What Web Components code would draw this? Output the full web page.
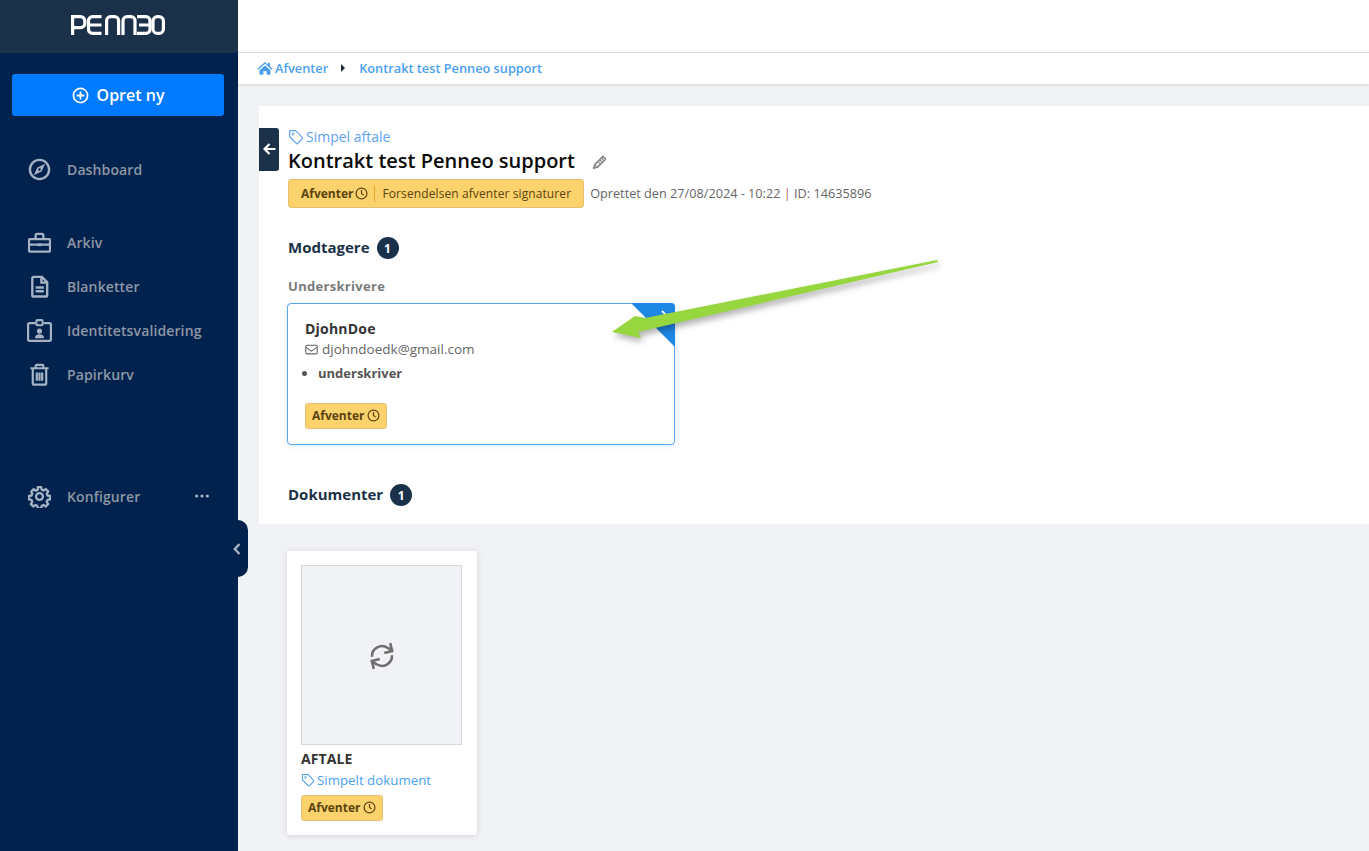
<!DOCTYPE html>
<html lang="da">
<head>
<meta charset="utf-8">
<title>Kontrakt test Penneo support</title>
<style>
  html, body { margin: 0; height: 851px; overflow: hidden; background: #f0f2f5; font-family: "Open Sans", "Liberation Sans", sans-serif; }
</style>
</head>
<body>
<pn-app></pn-app>
<script>
const ICONS = {
  plus: '<circle cx="12" cy="12" r="10" fill="none" stroke="currentColor" stroke-width="2.400"/><path d="M12 6.500v11M6.500 12h11" stroke="currentColor" stroke-width="2.600" fill="none"/>',
  compass: '<circle cx="12" cy="12" r="10" fill="none" stroke="currentColor" stroke-width="2.500"/><path d="M18 6l-8.200 3.800L6 18l8.200-3.800z" fill="currentColor"/><circle cx="12" cy="12" r="1.300" fill="#01224d"/>',
  briefcase: '<path d="M2 8.500h20a1 1 0 0 1 1 1V20a1.500 1.500 0 0 1-1.500 1.500h-19A1.500 1.500 0 0 1 1 20V9.500a1 1 0 0 1 1-1zM8 8V4.500A1.500 1.500 0 0 1 9.500 3h5A1.500 1.500 0 0 1 16 4.500V8M1 14.200h8.500M14.500 14.200H23" fill="none" stroke="currentColor" stroke-width="2.400"/><rect x="9.500" y="12.800" width="5" height="3" fill="currentColor"/>',
  file: '<path d="M6 2h8.500L20 7.500V21a1.500 1.500 0 0 1-1.500 1.500h-12.500A1.500 1.500 0 0 1 4.500 21V3.500A1.500 1.500 0 0 1 6 2zM14 2v6h6" fill="none" stroke="currentColor" stroke-width="2.500"/><path d="M8 13h8.500M8 17h8.500" stroke="currentColor" stroke-width="2.500"/>',
  idcard: '<path d="M8 5H2.500A1.500 1.500 0 0 0 1 6.500v14A1.500 1.500 0 0 0 2.500 22h19a1.500 1.500 0 0 0 1.500-1.500v-14A1.500 1.500 0 0 0 21.500 5H16" fill="none" stroke="currentColor" stroke-width="2.200"/><rect x="9" y="2" width="6" height="5" rx="1" fill="none" stroke="currentColor" stroke-width="2"/><circle cx="12" cy="12.500" r="2.500" fill="currentColor"/><path d="M7.500 19.500c0-2.300 2-3.800 4.500-3.800s4.500 1.500 4.500 3.800z" fill="currentColor"/>',
  trash: '<path d="M2.500 5.500h19M8 5V3a1 1 0 0 1 1-1h6a1 1 0 0 1 1 1v2M5 6v15a1.500 1.500 0 0 0 1.500 1.500h11A1.500 1.500 0 0 0 19 21V6M9.200 10v8.500M12 10v8.500M14.800 10v8.500" fill="none" stroke="currentColor" stroke-width="2.300"/>',
  gear: '<path d="M10 1.800h4l.6 3 2.100.9 2.600-1.700 2.800 2.800-1.700 2.600.9 2.100 3 .6v4l-3 .6-.9 2.100 1.700 2.600-2.800 2.800-2.600-1.700-2.100.9-.6 3h-4l-.6-3-2.100-.9-2.600 1.700-2.800-2.800 1.700-2.600-.9-2.100-3-.6v-4l3-.6.9-2.100L2.500 7l2.800-2.800 2.600 1.700 2.100-.9z" transform="translate(1.200 .6) scale(.9)" fill="none" stroke="currentColor" stroke-width="2.700" stroke-linejoin="round"/><circle cx="12" cy="12" r="3.600" fill="none" stroke="currentColor" stroke-width="2.400"/>',
  dots: '<circle cx="4" cy="12" r="2.400" fill="currentColor"/><circle cx="12" cy="12" r="2.400" fill="currentColor"/><circle cx="20" cy="12" r="2.400" fill="currentColor"/>',
  home: '<path d="M12 3L.5 13l1.400 1.500L12 5.800l10.100 8.700 1.400-1.500-4-3.500V4.500h-3.200v2.700z" fill="currentColor"/><path d="M3.800 15.500L12 8.400l8.200 7.100V21a1 1 0 0 1-1 1h-4.700v-5.500h-5V22H4.800a1 1 0 0 1-1-1z" fill="currentColor"/>',
  tag: '<path d="M2.500 3.500a1 1 0 0 1 1-1h8l10 10a1.500 1.500 0 0 1 0 2.100l-7 7a1.500 1.500 0 0 1-2.100 0l-9.900-10z" fill="none" stroke="currentColor" stroke-width="1.800" stroke-linejoin="round"/><circle cx="7.500" cy="7.500" r="1.500" fill="none" stroke="currentColor" stroke-width="1.500"/>',
  clock: '<circle cx="12" cy="12" r="10" fill="none" stroke="currentColor" stroke-width="2.200"/><path d="M12 5.500V12l4 3" fill="none" stroke="currentColor" stroke-width="2.200"/>',
  pencil: '<path d="M16.500 3.500l4 4L8 20l-5.500 1.500L4 16z" fill="none" stroke="currentColor" stroke-width="2.400" stroke-linejoin="round"/><path d="M14 6l4 4M11.500 8.500l4 4M9 11l4 4M4 16l4 4" stroke="currentColor" stroke-width="1.800" fill="none"/>',
  mail: '<rect x="1.500" y="4" width="21" height="16" rx="2" fill="none" stroke="currentColor" stroke-width="2"/><path d="M2 8l10 7 10-7" fill="none" stroke="currentColor" stroke-width="2"/>',
  sync: '<g transform="rotate(-14 12 12)"><path d="M3.500 10.500A8.700 8.700 0 0 1 18.500 6.500L21 9M20.500 13.500A8.700 8.700 0 0 1 5.500 17.500L3 15" fill="none" stroke="currentColor" stroke-width="2.200"/><path d="M21.500 3V10h-7M2.500 21V14h7" fill="none" stroke="currentColor" stroke-width="2.200"/></g>'
};

class PnIcon extends HTMLElement {
  connectedCallback() {
    const size = this.getAttribute('size') || '16';
    const name = this.getAttribute('name');
    this.attachShadow({ mode: 'open' }).innerHTML = `
      <style>:host { display: inline-flex; flex: none; } svg { display: block; }</style>
      <svg width="${size}" height="${size}" viewBox="0 0 24 24" aria-hidden="true">${ICONS[name]}</svg>`;
  }
}

class PnNavItem extends HTMLElement {
  connectedCallback() {
    const more = this.hasAttribute('more');
    this.attachShadow({ mode: 'open' }).innerHTML = `
      <style>
        :host { display: flex; align-items: center; height: 44px; color: #8d97a5; font-size: 14px; font-weight: 600; letter-spacing: .12px; }
        .ico { width: 24px; margin-left: 27px; margin-right: 16px; display: flex; justify-content: center; color: #a5b3c4; }
        .more { margin-left: auto; margin-right: 28px; color: #a5b3c4; display: flex; }
      </style>
      <span class="ico"><pn-icon name="${this.getAttribute('icon')}" size="${this.getAttribute('size') || 23}"></pn-icon></span>
      <slot></slot>
      ${more ? '<span class="more"><pn-icon name="dots" size="16"></pn-icon></span>' : ''}`;
  }
}

class PnSidebar extends HTMLElement {
  connectedCallback() {
    this.attachShadow({ mode: 'open' }).innerHTML = `
      <style>
        :host { display: block; position: relative; width: 238px; background: #01224d; flex: none; }
        .brand { height: 53px; background: #1a3149; display: flex; align-items: center; justify-content: center; }
        .brand svg { display: block; margin-left: -1px; margin-top: -3px; transform: translateX(-1px); }
        .create { margin: 21px 14px 31px 12px; height: 42px; background: #007bff; color: #fff; border-radius: 3px;
          display: flex; align-items: center; justify-content: center; gap: 8px; font-size: 16px; font-weight: 600; }
        .group { margin-bottom: 29px; }
        .group.last { margin-top: 78px; }
        .tab { position: absolute; left: 228px; top: 520px; width: 20px; height: 57px; background: #01224d;
          border-radius: 0 10px 10px 0; display: flex; align-items: center; justify-content: center; color: #a5b3c4; }
        .tab svg { margin-left: -3px; display: block; }
      </style>
      <div class="brand">
        <svg width="94" height="20" viewBox="0 0 94 20" role="img" aria-label="Penneo" fill="none" stroke="#fff" stroke-width="3.200">
          <path d="M1.600 20V1.600h8a4.200 4.200 0 0 1 4.200 4.200v2.600a4.200 4.200 0 0 1-4.200 4.200H1.600"/>
          <path d="M30.500 1.600h-9a4 4 0 0 0-4 4v8.800a4 4 0 0 0 4 4h9M17.500 10h13"/>
          <path d="M35.600 20V5.600a4 4 0 0 1 4-4h4a4 4 0 0 1 4 4V20"/>
          <path d="M52 20V5.600a4 4 0 0 1 4-4h4a4 4 0 0 1 4 4V20"/>
          <path d="M66 1.600h9a4 4 0 0 1 4 4v8.800a4 4 0 0 1-4 4h-9M68 10h11"/>
          <rect x="82" y="1.600" width="10.400" height="16.800" rx="4.500"/>
        </svg>
      </div>
      <div class="create"><pn-icon name="plus" size="17"></pn-icon><span>Opret ny</span></div>
      <div class="group"><pn-nav-item icon="compass">Dashboard</pn-nav-item></div>
      <div class="group">
        <pn-nav-item icon="briefcase">Arkiv</pn-nav-item>
        <pn-nav-item icon="file">Blanketter</pn-nav-item>
        <pn-nav-item icon="idcard" size="25">Identitetsvalidering</pn-nav-item>
        <pn-nav-item icon="trash">Papirkurv</pn-nav-item>
      </div>
      <div class="group last"><pn-nav-item icon="gear" more>Konfigurer</pn-nav-item></div>
      <div class="tab">
        <svg width="8" height="12" viewBox="0 0 8 12" fill="none" stroke="currentColor" stroke-width="2.400"><path d="M6.500 1L1.800 6l4.700 5"/></svg>
      </div>`;
  }
}

class PnBreadcrumb extends HTMLElement {
  connectedCallback() {
    this.attachShadow({ mode: 'open' }).innerHTML = `
      <style>
        :host { display: flex; align-items: center; height: 32px; padding: 0 0 2px 19px; box-sizing: border-box; background: #fff; border-top: 1px solid #dcdcdc;
          box-shadow: 0 1px 3px rgba(0,0,0,.12); color: #4a9fef; font-size: 12.750px; font-weight: 600; position: relative; }
        .home { margin-right: 2px; display: flex; }
        .sep { width: 0; height: 0; border-left: 4px solid #1a2a3a; border-top: 4px solid transparent; border-bottom: 4px solid transparent; margin: 0 14px 0 13px; }
      </style>
      <span class="home"><pn-icon name="home" size="16"></pn-icon></span>
      <span>Afventer</span><span class="sep"></span><span>Kontrakt test Penneo support</span>`;
  }
}

class PnStatus extends HTMLElement {
  connectedCallback() {
    const note = this.getAttribute('note');
    this.attachShadow({ mode: 'open' }).innerHTML = `
      <style>
        :host { display: inline-flex; align-items: center; box-sizing: border-box; height: 26px; padding: 0 6px 2px; background: #fbd26c;
          border: 1px solid #e5c074; border-radius: 3px; color: #5c430e; font-size: 12px; font-weight: 700; gap: 3px; }
        :host([note]) { height: 29px; padding: 0 12px; gap: 2px; }
        .note { font-weight: 500; letter-spacing: .1px; margin-left: 4px; padding-left: 7px; border-left: 1px solid #e8a92b; line-height: 16px; }
      </style>
      <span>Afventer</span><pn-icon name="clock" size="13"></pn-icon>
      ${note ? `<span class="note">${note}</span>` : ''}`;
  }
}

class PnHeading extends HTMLElement {
  connectedCallback() {
    this.attachShadow({ mode: 'open' }).innerHTML = `
      <style>
        :host { display: flex; align-items: center; gap: 7px; height: 22px; color: #1a3149; font-size: 15px; font-weight: 700; }
        .label { margin-bottom: 2px; }
        .count { width: 22px; height: 22px; border-radius: 50%; background: #1a3149; color: #fff; font-size: 12px; font-weight: 700;
          display: flex; align-items: center; justify-content: center; }
      </style>
      <span class="label"><slot></slot></span><span class="count">${this.getAttribute('count')}</span>`;
  }
}

class PnRecipient extends HTMLElement {
  connectedCallback() {
    this.attachShadow({ mode: 'open' }).innerHTML = `
      <style>
        :host { display: block; position: relative; box-sizing: border-box; width: 388px; height: 142px; padding: 15px 17px 0; background: #fff;
          border: 1px solid #5ba6ec; border-radius: 4px; box-shadow: 0 1px 5px rgba(30,136,229,.18); color: #555; }
        .name { font-size: 14px; font-weight: 700; color: #333; line-height: 20px; letter-spacing: .2px; }
        .mail { display: flex; align-items: center; gap: 4px; font-size: 13.500px; line-height: 20px; color: #666; }
        ul { margin: 4px 0 0; padding: 0 0 0 13px; font-size: 13px; font-weight: 700; line-height: 20px; }
        pn-status { margin-top: 20px; }
        .corner { position: absolute; top: -1px; right: -1px; width: 44px; height: 44px; background: #1e88e5; border-top-right-radius: 4px;
          clip-path: polygon(0 0, 100% 0, 100% 100%); color: #fff; }
        .corner svg { position: absolute; left: 30px; top: 7px; display: block; }
      </style>
      <div class="corner">
        <svg width="8" height="12" viewBox="0 0 8 12" fill="none" stroke="currentColor" stroke-width="1.800"><path d="M1 1l5.500 5.500L1 12"/></svg>
      </div>
      <div class="name">DjohnDoe</div>
      <div class="mail"><pn-icon name="mail" size="13"></pn-icon><span>djohndoedk@gmail.com</span></div>
      <ul><li>underskriver</li></ul>
      <pn-status></pn-status>`;
  }
}

class PnDocCard extends HTMLElement {
  connectedCallback() {
    this.attachShadow({ mode: 'open' }).innerHTML = `
      <style>
        :host { display: block; box-sizing: border-box; width: 190px; height: 284px; padding: 14px; background: #fff; border-radius: 3px;
          box-shadow: 0 1px 6px rgba(0,0,0,.12); }
        .thumb { box-sizing: border-box; width: 161px; height: 180px; background: #f0f2f5; border: 1px solid #d5d8dd; display: flex; align-items: center; justify-content: center; color: #6f6f6f; padding-top: 2px; }
        .title { margin-top: 4px; font-size: 14px; font-weight: 700; color: #333; line-height: 20px; letter-spacing: .1px; }
        .type { display: flex; align-items: center; gap: 2px; color: #4a9fef; font-size: 13.300px; line-height: 20px; margin-top: 1px; }
        pn-status { margin-top: 5px; }
      </style>
      <div class="thumb"><pn-icon name="sync" size="28"></pn-icon></div>
      <div class="title">AFTALE</div>
      <div class="type"><pn-icon name="tag" size="14"></pn-icon><span>Simpelt dokument</span></div>
      <pn-status></pn-status>`;
  }
}

class PnPanel extends HTMLElement {
  connectedCallback() {
    this.attachShadow({ mode: 'open' }).innerHTML = `
      <style>
        :host { display: block; position: relative; box-sizing: border-box; height: 418px; margin: 22px 0 0 21px; padding: 21px 0 0 29px; background: #fff; }
        .back { position: absolute; left: 0; top: 22px; width: 20px; height: 43px; background: #1a3149; border-radius: 0 3px 3px 0;
          display: flex; align-items: center; justify-content: center; }
        .back svg { display: block; margin-top: -2px; }
        .type { display: flex; align-items: center; gap: 2px; color: #5fa3ee; font-size: 14px; line-height: 20px; }
        h1 { display: flex; align-items: center; margin: 0; font-size: 20px; font-weight: 600; line-height: 27px; color: #0a0a0a; }
        h1 pn-icon { margin-left: 17px; color: #888; margin-top: 3px; }
        .status { display: flex; align-items: center; margin-top: 5px; font-size: 12.700px; color: #666; }
        .meta { margin-left: 6px; margin-bottom: 2px; }
        .bar { color: #b5615f; }
        pn-heading.m { margin-top: 29px; }
        .sub { margin-top: 18px; font-size: 13px; font-weight: 700; line-height: 18px; color: #7a7a7a; letter-spacing: .3px; }
        pn-recipient { margin: 8px 0 0 -1px; }
        pn-heading.d { margin-top: 39px; }
      </style>
      <div class="back">
        <svg width="13" height="12" viewBox="0 0 13 12" fill="none" stroke="#fff" stroke-width="2.200"><path d="M6.500 1L1.500 6l5 5M2 6h10.500"/></svg>
      </div>
      <div class="type"><pn-icon name="tag" size="16"></pn-icon><span>Simpel aftale</span></div>
      <h1>Kontrakt test Penneo support<pn-icon name="pencil" size="16"></pn-icon></h1>
      <div class="status">
        <pn-status note="Forsendelsen afventer signaturer"></pn-status>
        <span class="meta">Oprettet den 27/08/2024 - 10:22 <span class="bar">|</span> ID: 14635896</span>
      </div>
      <pn-heading class="m" count="1">Modtagere</pn-heading>
      <div class="sub">Underskrivere</div>
      <pn-recipient></pn-recipient>
      <pn-heading class="d" count="1">Dokumenter</pn-heading>`;
  }
}

class PnApp extends HTMLElement {
  connectedCallback() {
    this.attachShadow({ mode: 'open' }).innerHTML = `
      <style>
        :host { display: flex; position: relative; width: 1369px; height: 851px; overflow: hidden; background: #f0f2f5; }
        main { flex: 1; min-width: 0; }
        .top { height: 52px; background: #fff; }
        .docs { padding: 27px 0 0 49px; }
        .arrow { position: absolute; left: 0; top: 0; pointer-events: none; filter: drop-shadow(2px 4px 3px rgba(0,0,0,.3)); }
      </style>
      <pn-sidebar></pn-sidebar>
      <main>
        <div class="top"></div>
        <pn-breadcrumb></pn-breadcrumb>
        <pn-panel></pn-panel>
        <div class="docs"><pn-doc-card></pn-doc-card></div>
      </main>
      <svg class="arrow" width="1369" height="851" aria-hidden="true">
        <polygon points="937,260 938,262 638,332 641,338 612,332 635,316 645,318" fill="#97d63e"/>
      </svg>`;
  }
}

customElements.define('pn-icon', PnIcon);
customElements.define('pn-nav-item', PnNavItem);
customElements.define('pn-sidebar', PnSidebar);
customElements.define('pn-breadcrumb', PnBreadcrumb);
customElements.define('pn-status', PnStatus);
customElements.define('pn-heading', PnHeading);
customElements.define('pn-recipient', PnRecipient);
customElements.define('pn-doc-card', PnDocCard);
customElements.define('pn-panel', PnPanel);
customElements.define('pn-app', PnApp);
</script>
</body>
</html>
